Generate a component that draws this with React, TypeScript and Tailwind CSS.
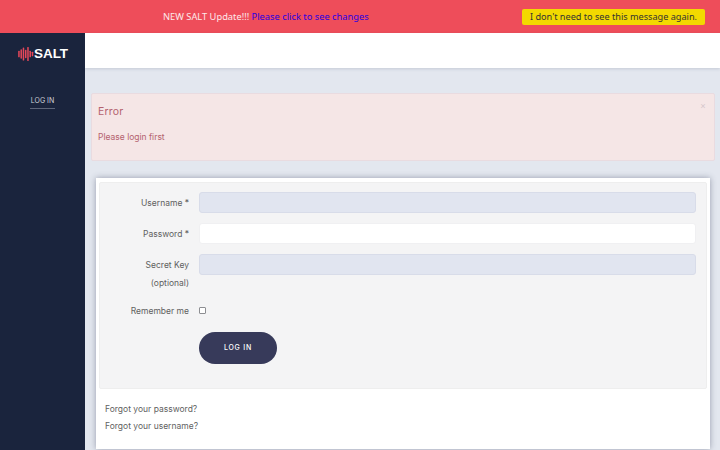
const labelFont = "font-['Inter','Liberation_Sans',sans-serif]"

function SaltLogo() {
  const bars = [
    [1, 7],
    [3.4, 10],
    [5.8, 14],
    [8.2, 9],
    [10.6, 15],
    [13, 7],
    [15.4, 5],
  ]
  return (
    <svg width="16" height="16" viewBox="0 0 17 16" className="shrink-0">
      {bars.map(([x, h]) => (
        <rect key={x} x={x - 0.8} y={8 - h / 2} width="1.6" height={h} rx="0.7" fill="#e8485a" />
      ))}
    </svg>
  )
}

function Field({
  label,
  hint,
  filled,
}: {
  label: string
  hint?: string
  filled?: boolean
}) {
  return (
    <div className="flex items-start">
      <div className="w-[89px] shrink-0 text-right text-[8.5px] leading-[18px] text-[#5f5f5f] pt-[2px]">
        <div>{label}</div>
        {hint && <div>{hint}</div>}
      </div>
      <input
        className={`ml-[10px] h-[21px] flex-1 rounded-[3px] border outline-none ${
          filled ? 'bg-[#e1e5f0] border-[#d8dce9]' : 'bg-white border-[#f0f0f2]'
        }`}
      />
    </div>
  )
}

export default function App() {
  return (
    <div className="w-[720px] h-[450px] overflow-hidden flex flex-col bg-[#e3e7ef]">
      {/* Update banner */}
      <div className="h-[33px] shrink-0 bg-[#ee4d5a] flex items-center font-['Noto_Sans',sans-serif] text-[9.15px]">
        <div className="ml-[163px] text-[9.3px] text-[#fde9ea]">
          NEW SALT Update!!!{' '}
          <a href="#" className="text-[#2a00e0]">
            Please click to see changes
          </a>
        </div>
        <button className="ml-auto mr-[15px] h-[16px] px-[8px] rounded-[2px] bg-[#f3d900] text-[#333] leading-none">
          I don't need to see this message again.
        </button>
      </div>

      <div className={`flex flex-1 min-h-0 ${labelFont}`}>
        {/* Sidebar */}
        <aside className="w-[85px] shrink-0 bg-[#1a243d] flex flex-col items-center">
          <div className="mt-[13px] ml-[1px] flex items-center">
            <SaltLogo />
            <span className="font-['Liberation_Sans',sans-serif] text-[13.5px] font-bold leading-none text-white">
              SALT
            </span>
          </div>
          <a
            href="#"
            className="mt-[34px] pb-[3px] px-[1px] text-[7px] leading-[9px] text-[#cfd1d8] border-b border-[#5d6579]"
          >
            LOG IN
          </a>
        </aside>

        <main className="flex-1 min-w-0 flex flex-col">
          <div className="h-[35px] shrink-0 bg-white shadow-[0_1px_3px_rgba(60,70,100,0.18)]" />

          <div className="relative mt-[25px] ml-[6px] mr-[5px] h-[68px] shrink-0 rounded-[2px] border border-[#e9dbe0] bg-[#f5e6e6] px-[6px] text-[#b4626e]">
            <div className="mt-[10px] text-[10.5px] leading-[15px] tracking-[0.2px]">Error</div>
            <div className="mt-[12px] text-[8.5px] leading-[12px]">Please login first</div>
            <span className="absolute right-[8px] top-[6px] text-[9px] leading-[12px] text-[#d5c8cc]">×</span>
          </div>

          <div className="mt-[17px] mb-[1px] ml-[11px] mr-[10px] flex-1 min-h-0 bg-white pt-[4px] px-[3px] shadow-[0_0_6px_rgba(60,65,90,0.45)]">
            <div className="h-[207px] rounded-[2px] border border-[#eeeeee] bg-[#f4f4f5] pt-[9px] pr-[10px]">
              <div className="flex flex-col gap-[10px]">
                <Field label="Username *" filled />
                <Field label="Password *" />
                <Field label="Secret Key" hint="(optional)" filled />
              </div>
              <div className="mt-[10px] flex items-center">
                <div className="w-[89px] text-right text-[8.5px] leading-[18px] text-[#5f5f5f]">Remember me</div>
                <input
                  type="checkbox"
                  className="ml-[10px] mb-[2px] w-[7px] h-[7px] appearance-none rounded-[1px] border border-[#8d8e92] bg-white"
                />
              </div>
              <button className="mt-[12px] ml-[99px] block w-[78px] h-[32px] rounded-full bg-[#373a5a] text-white text-[7px] font-medium tracking-[0.8px] pt-px">
                LOG IN
              </button>
            </div>
            <div className="px-[6px] pt-[12px] text-[8.5px] leading-[17px] text-[#5f5f5f]">
              <div>
                <a href="#">Forgot your password?</a>
              </div>
              <div>
                <a href="#">Forgot your username?</a>
              </div>
            </div>
          </div>
        </main>
      </div>
    </div>
  )
}
